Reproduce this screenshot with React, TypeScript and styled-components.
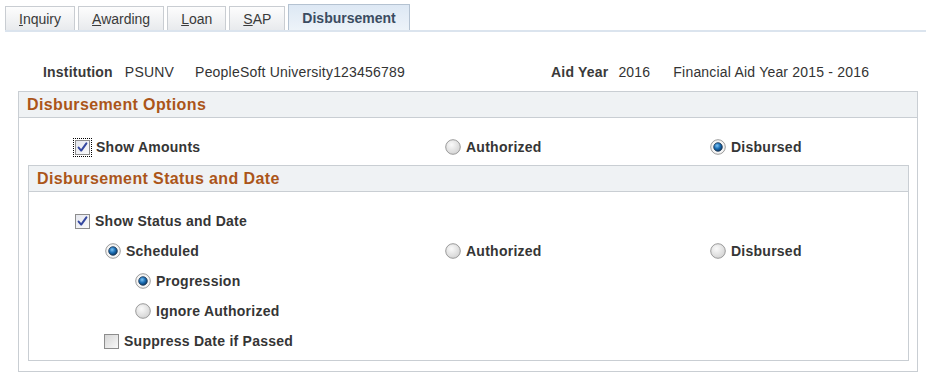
import React from "react";
import styled, { createGlobalStyle } from "styled-components";

const Global = createGlobalStyle`
  html, body { margin: 0; padding: 0; background: #fff; }
  body { font-family: "Liberation Sans", Arial, sans-serif; color: #333; }
`;

const Page = styled.div`
  width: 926px;
  height: 378px;
  overflow: hidden;
`;

const TabBar = styled.div`
  display: flex;
  align-items: flex-end;
  gap: 3px;
  margin-left: 5px;
  padding-top: 4px;
  height: 26px;
  border-bottom: 2px solid #dbe4ee;
`;

const Tab = styled.div<{ $active?: boolean }>`
  box-sizing: border-box;
  height: ${(p) => (p.$active ? 26 : 24)}px;
  padding: 0 13px 0 13px;
  display: flex;
  align-items: center;
  border: 1px solid ${(p) => (p.$active ? "#b4c2d1" : "#c9cdd2")};
  border-bottom: none;
  background: ${(p) =>
    p.$active
      ? "linear-gradient(#dde8f4, #edf3f9)"
      : "linear-gradient(#fdfdfd, #e8eaed)"};
  font-size: 14px;
  font-weight: ${(p) => (p.$active ? "bold" : "normal")};
  color: ${(p) => (p.$active ? "#3b4c61" : "#3a3a3a")};
  u { text-decoration: underline; }
`;

const InfoRow = styled.div`
  display: flex;
  align-items: center;
  height: 17px;
  margin-top: 32px;
  padding-left: 43px;
  font-size: 14px;
  line-height: 17px;
  letter-spacing: 0.2px;
`;

const InfoGroup = styled.div<{ $width?: number }>`
  display: flex;
  align-items: center;
  ${(p) => (p.$width ? `width: ${p.$width}px;` : "")}
`;

const InfoLabel = styled.span`
  font-weight: bold;
  color: #3a3a3a;
`;

const InfoValue = styled.span<{ $gap: number }>`
  margin-left: ${(p) => p.$gap}px;
  color: #333;
`;

const Section = styled.div<{ $inner?: boolean }>`
  box-sizing: border-box;
  border: 1px solid #c9ced3;
  background: #fff;
  ${(p) =>
    p.$inner
      ? `margin: 3px 8px 0 9px; padding-bottom: 4px;`
      : `width: 900px; margin: 10px 0 0 18px; padding-bottom: 10px;`}
`;

const SectionHeader = styled.div`
  height: 25px;
  display: flex;
  align-items: center;
  padding-left: 8px;
  background: #eff2f4;
  border-bottom: 1px solid #c9ced3;
  font-size: 16px;
  font-weight: bold;
  letter-spacing: 0.38px;
  color: #ab5519;
`;

const Body = styled.div<{ $top: number }>`
  padding-top: ${(p) => p.$top}px;
`;

const Row = styled.div<{ $left: number }>`
  display: grid;
  grid-template-columns: 370px 265px 1fr;
  align-items: center;
  height: 30px;
  padding-left: ${(p) => p.$left}px;
`;

const Cell = styled.div<{ $indent?: number }>`
  padding-left: ${(p) => p.$indent ?? 0}px;
  display: flex;
  align-items: center;
`;

const Control = styled.label<{ $gap?: number }>`
  display: flex;
  align-items: center;
  gap: ${(p) => p.$gap ?? 5}px;
  font-size: 14px;
  font-weight: bold;
  letter-spacing: 0.25px;
  color: #353535;
  white-space: nowrap;
`;

const Focus = styled.span`
  display: inline-flex;
  outline: 1px dotted #000;
  outline-offset: 1px;
`;

const Box = ({ checked }: { checked?: boolean }) => (
  <svg width="15" height="15" viewBox="0 0 15 15">
    <defs>
      <linearGradient id={checked ? "cbOn" : "cbOff"} x1="0" y1="0" x2="1" y2="1">
        <stop offset="0" stopColor={checked ? "#e4e6ee" : "#d4d4d4"} />
        <stop offset="1" stopColor="#fbfbfb" />
      </linearGradient>
    </defs>
    <rect
      x="0.5"
      y="0.5"
      width="14"
      height="14"
      fill={`url(#${checked ? "cbOn" : "cbOff"})`}
      stroke="#8d8d8d"
    />
    {checked && (
      <path
        d="M3.6 7.6 L6.2 10.6 L11.4 3.4"
        fill="none"
        stroke="#3548a0"
        strokeWidth="2"
        strokeLinecap="round"
        strokeLinejoin="round"
      />
    )}
  </svg>
);

const Radio = ({ on }: { on?: boolean }) => (
  <svg width="16" height="16" viewBox="0 0 16 16">
    <defs>
      <radialGradient id="rdOff" cx="0.4" cy="0.35" r="0.7">
        <stop offset="0" stopColor="#fafafa" />
        <stop offset="1" stopColor="#d2d2d2" />
      </radialGradient>
      <radialGradient id="rdDot" cx="0.4" cy="0.35" r="0.65">
        <stop offset="0" stopColor="#7cc4f5" />
        <stop offset="0.55" stopColor="#1a6db4" />
        <stop offset="1" stopColor="#0b3a66" />
      </radialGradient>
    </defs>
    <circle cx="8" cy="8" r="7.3" fill={on ? "#f4f4f4" : "url(#rdOff)"} stroke="#9b9b9b" />
    {on && <circle cx="8" cy="8" r="4.3" fill="url(#rdDot)" stroke="#1d3653" strokeWidth="0.8" />}
  </svg>
);

const Check = ({ label, checked, focus }: { label: string; checked?: boolean; focus?: boolean }) => (
  <Control $gap={focus ? 6 : 5}>
    {focus ? (
      <Focus>
        <Box checked={checked} />
      </Focus>
    ) : (
      <Box checked={checked} />
    )}
    {label}
  </Control>
);

const Opt = ({ label, on }: { label: string; on?: boolean }) => (
  <Control>
    <Radio on={on} />
    {label}
  </Control>
);

const tabs = [
  { first: "I", rest: "nquiry" },
  { first: "A", rest: "warding" },
  { first: "L", rest: "oan" },
  { first: "S", rest: "AP" },
];

export default function App() {
  return (
    <Page>
      <Global />
      <TabBar>
        {tabs.map((t) => (
          <Tab key={t.rest}>
            <span>
              <u>{t.first}</u>
              {t.rest}
            </span>
          </Tab>
        ))}
        <Tab $active>Disbursement</Tab>
      </TabBar>

      <InfoRow>
        <InfoGroup $width={508}>
          <InfoLabel>Institution</InfoLabel>
          <InfoValue $gap={12}>PSUNV</InfoValue>
          <InfoValue $gap={21}>PeopleSoft University123456789</InfoValue>
        </InfoGroup>
        <InfoGroup>
          <InfoLabel>Aid Year</InfoLabel>
          <InfoValue $gap={10}>2016</InfoValue>
          <InfoValue $gap={23}>Financial Aid Year 2015 - 2016</InfoValue>
        </InfoGroup>
      </InfoRow>

      <Section>
        <SectionHeader>Disbursement Options</SectionHeader>
        <Body $top={14}>
          <Row $left={56}>
            <Cell>
              <Check label="Show Amounts" checked focus />
            </Cell>
            <Cell>
              <Opt label="Authorized" />
            </Cell>
            <Cell>
              <Opt label="Disbursed" on />
            </Cell>
          </Row>
        </Body>

        <Section $inner>
          <SectionHeader>Disbursement Status and Date</SectionHeader>
          <Body $top={14}>
            <Row $left={46}>
              <Cell>
                <Check label="Show Status and Date" checked />
              </Cell>
            </Row>
            <Row $left={46}>
              <Cell $indent={30}>
                <Opt label="Scheduled" on />
              </Cell>
              <Cell>
                <Opt label="Authorized" />
              </Cell>
              <Cell>
                <Opt label="Disbursed" />
              </Cell>
            </Row>
            <Row $left={46}>
              <Cell $indent={60}>
                <Opt label="Progression" on />
              </Cell>
            </Row>
            <Row $left={46}>
              <Cell $indent={60}>
                <Opt label="Ignore Authorized" />
              </Cell>
            </Row>
            <Row $left={46}>
              <Cell $indent={29}>
                <Check label="Suppress Date if Passed" />
              </Cell>
            </Row>
          </Body>
        </Section>
      </Section>
    </Page>
  );
}
